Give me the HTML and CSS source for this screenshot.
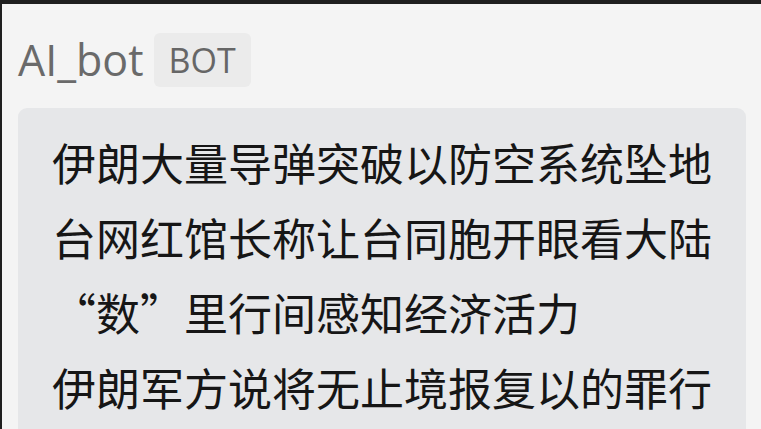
FILE: index.html
```html
<!DOCTYPE html>
<html lang="zh-CN">
<head>
<meta charset="utf-8">
<title>AI_bot</title>
<link rel="stylesheet" href="styles.css">
</head>
<body>
<div class="panel">
  <div class="header">
    <span class="name">AI_bot</span>
    <span class="badge">BOT</span>
  </div>
  <div class="bubble">
    <p class="line">伊朗大量导弹突破以防空系统坠地</p>
    <p class="line">台网红馆长称让台同胞开眼看大陆</p>
    <p class="line">“数”里行间感知经济活力</p>
    <p class="line">伊朗军方说将无止境报复以的罪行</p>
  </div>
</div>
</body>
</html>
```
FILE: styles.css
```css
html, body {
  margin: 0;
  padding: 0;
  height: 100%;
  overflow: hidden;
}
body {
  background: #1f1f1f;
  font-family: "Open Sans", "Noto Sans CJK SC", sans-serif;
}
.panel {
  margin: 4px 0 0 2px;
  height: calc(100% - 4px);
  background: #f4f4f4;
  padding: 29px 15px 0 16px;
  box-sizing: border-box;
  overflow: hidden;
}
.header {
  display: flex;
  align-items: center;
  gap: 10px;
  height: 54px;
}
.name {
  font-size: 43px;
  color: #6a6a6a;
  line-height: 54px;
}
.badge {
  display: inline-flex;
  align-items: center;
  justify-content: center;
  width: 97px;
  height: 54px;
  background: #ebebeb;
  border-radius: 6px;
  font-size: 34px;
  color: #666666;
  box-sizing: border-box;
}
.bubble {
  margin-top: 21px;
  background: #e6e7e9;
  border-radius: 9px 9px 0 0;
  padding: 17px 30px 30px 34px;
  height: 400px;
}
.line {
  margin: 0;
  font-family: "Noto Sans CJK SC", sans-serif;
  font-size: 44px;
  line-height: 75px;
  color: #161616;
  white-space: nowrap;
}
```
